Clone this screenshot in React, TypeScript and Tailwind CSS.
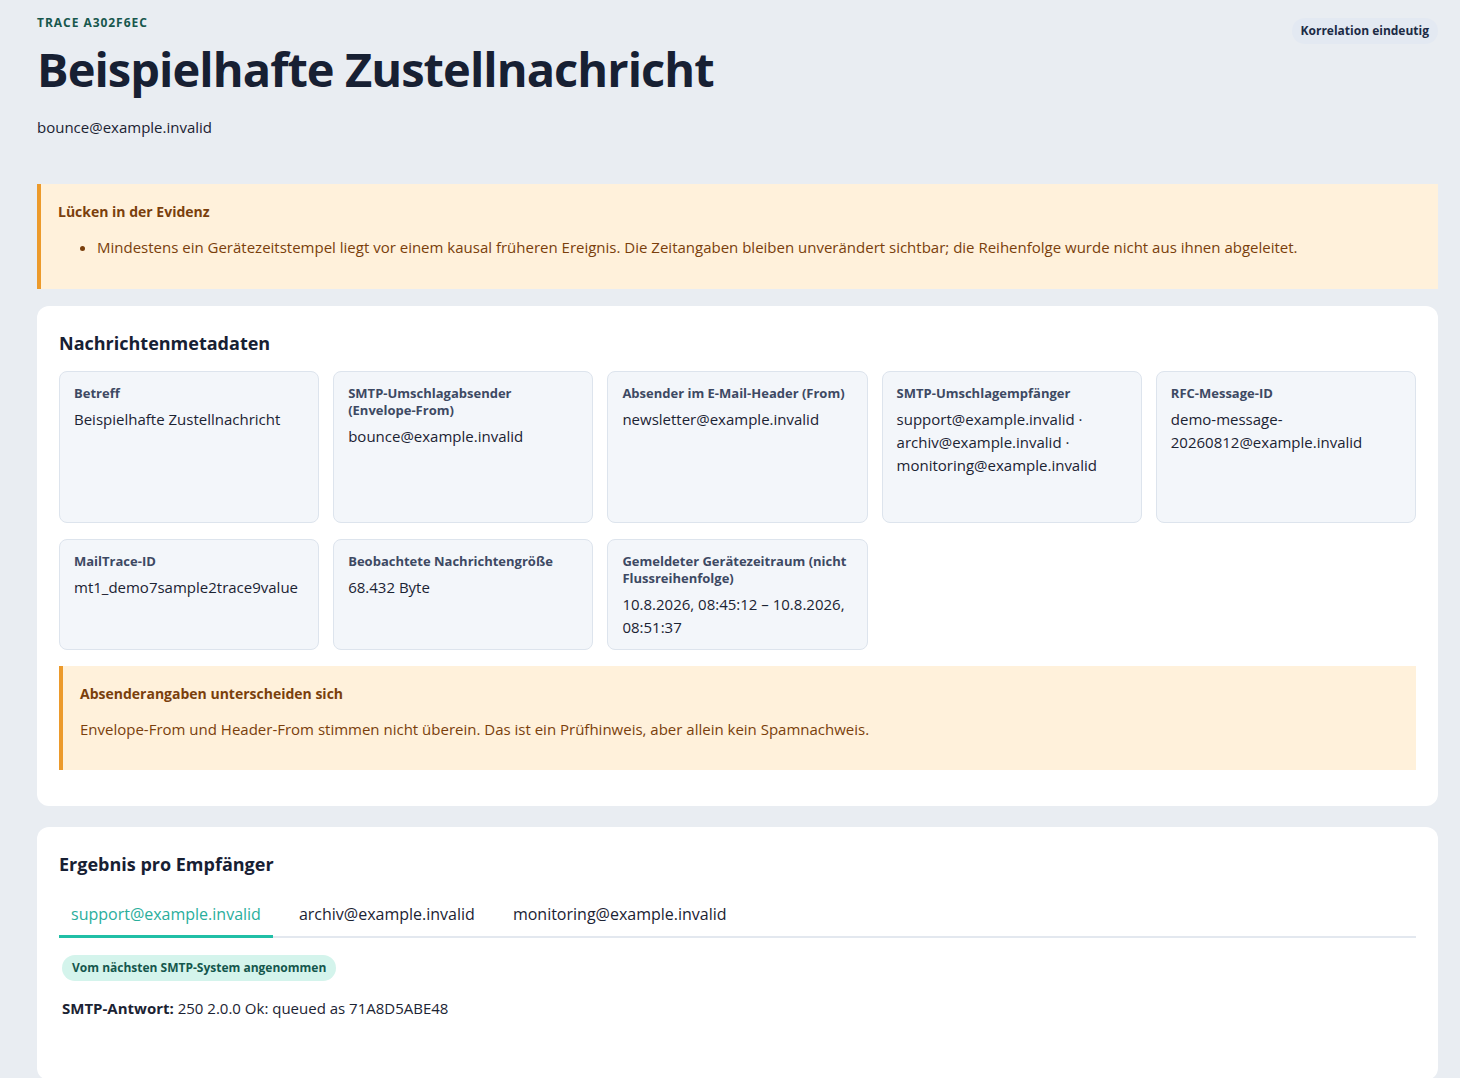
import React, { useState } from 'react'

const font = { fontFamily: '"Open Sans", "Noto Sans", sans-serif' }

const meta = [
  { label: 'Betreff', value: 'Beispielhafte Zustellnachricht' },
  { label: 'SMTP-Umschlagabsender (Envelope-From)', value: 'bounce@example.invalid' },
  { label: 'Absender im E-Mail-Header (From)', value: 'newsletter@example.invalid' },
  {
    label: 'SMTP-Umschlagempfänger',
    value: 'support@example.invalid · archiv@example.invalid · monitoring@example.invalid',
  },
  { label: 'RFC-Message-ID', value: 'demo-message-20260812@example.invalid' },
  { label: 'MailTrace-ID', value: 'mt1_demo7sample2trace9value' },
  { label: 'Beobachtete Nachrichtengröße', value: '68.432 Byte' },
  { label: 'Gemeldeter Gerätezeitraum (nicht Flussreihenfolge)', value: '10.8.2026, 08:45:12 – 10.8.2026, 08:51:37' },
]

const recipients = ['support@example.invalid', 'archiv@example.invalid', 'monitoring@example.invalid']

export default function App() {
  const [tab, setTab] = useState(0)

  return (
    <div className="min-h-screen bg-[#e9edf2] text-[#1b2333]" style={font}>
      <div className="pl-[37px] pr-[22px] pt-[14px] pb-8">
        {/* header */}
        <header className="flex items-start justify-between">
          <div>
            <p className="text-[12px] font-bold uppercase tracking-[0.08em] text-[#17574d]">Trace A302F6EC</p>
            <h1 className="mt-[12px] text-[47px] leading-[1.1] font-bold tracking-[-0.02em] text-[#172033]">
              Beispielhafte Zustellnachricht
            </h1>
            <p className="mt-[20px] text-[15px] text-[#1b2333]">bounce@example.invalid</p>
          </div>
          <span className="mt-[4px] rounded-full bg-[#e3e9f2] px-[9px] py-[4px] text-[12px] font-bold text-[#1c2b45]">
            Korrelation eindeutig
          </span>
        </header>

        {/* evidence gaps */}
        <section className="mt-[46px] border-l-[4px] border-[#ec9a2b] bg-[#fff1db] px-[17px] pt-[17px] pb-[30px] text-[#7a3f0c]">
          <h3 className="text-[14px] font-bold">Lücken in der Evidenz</h3>
          <ul className="mt-[14px] list-disc pl-[39px] text-[15px]">
            <li>
              Mindestens ein Gerätezeitstempel liegt vor einem kausal früheren Ereignis. Die Zeitangaben bleiben
              unverändert sichtbar; die Reihenfolge wurde nicht aus ihnen abgeleitet.
            </li>
          </ul>
        </section>

        {/* metadata */}
        <section className="mt-[17px] rounded-[12px] bg-white px-[22px] pt-[24px] pb-[36px]">
          <h2 className="text-[18px] font-bold text-[#172033]">Nachrichtenmetadaten</h2>
          <div className="mt-[14px] grid grid-cols-5 grid-rows-[152px_auto] gap-x-[14px] gap-y-[16px]">
            {meta.map((m) => (
              <div key={m.label} className="rounded-[8px] border border-[#dde4ed] bg-[#f3f6fa] px-[14px] pt-[13px] pb-[10px]">
                <p className="text-[13px] font-bold leading-[17px] text-[#3d4963]">{m.label}</p>
                <p className="mt-[6px] text-[15px] leading-[23px] text-[#1b2333]">{m.value}</p>
              </div>
            ))}
          </div>

          <div className="mt-[16px] border-l-[4px] border-[#ec9a2b] bg-[#fff1db] px-[17px] pt-[17px] pb-[30px] text-[#7a3f0c]">
            <h3 className="text-[14px] font-bold">Absenderangaben unterscheiden sich</h3>
            <p className="mt-[14px] text-[15px]">
              Envelope-From und Header-From stimmen nicht überein. Das ist ein Prüfhinweis, aber allein kein
              Spamnachweis.
            </p>
          </div>
        </section>

        {/* per recipient */}
        <section className="mt-[21px] rounded-[12px] bg-white px-[22px] pt-[24px] pb-[60px]">
          <h2 className="text-[18px] font-bold text-[#172033]">Ergebnis pro Empfänger</h2>
          <div className="mt-[24px] flex gap-[14px] border-b-[2px] border-[#e3e8ef]">
            {recipients.map((r, i) => (
              <button
                key={r}
                onClick={() => setTab(i)}
                className={
                  i === tab
                    ? '-mb-[2px] border-b-[3px] border-[#20bfa6] px-[12px] pb-[9px] text-[16px] text-[#2aae9c]'
                    : '-mb-[2px] border-b-[3px] border-transparent px-[12px] pb-[9px] text-[16px] text-[#1b2333]'
                }
              >
                {r}
              </button>
            ))}
          </div>
          <div className="px-[3px]">
            <span className="mt-[17px] inline-block rounded-full bg-[#d4f4ec] px-[10px] py-[4px] text-[12px] font-bold text-[#14574c]">
              Vom nächsten SMTP-System angenommen
            </span>
            <p className="mt-[16px] text-[15px]">
              <span className="font-bold">SMTP-Antwort:</span> 250 2.0.0 Ok: queued as 71A8D5ABE48
            </p>
          </div>
        </section>
      </div>
    </div>
  )
}
